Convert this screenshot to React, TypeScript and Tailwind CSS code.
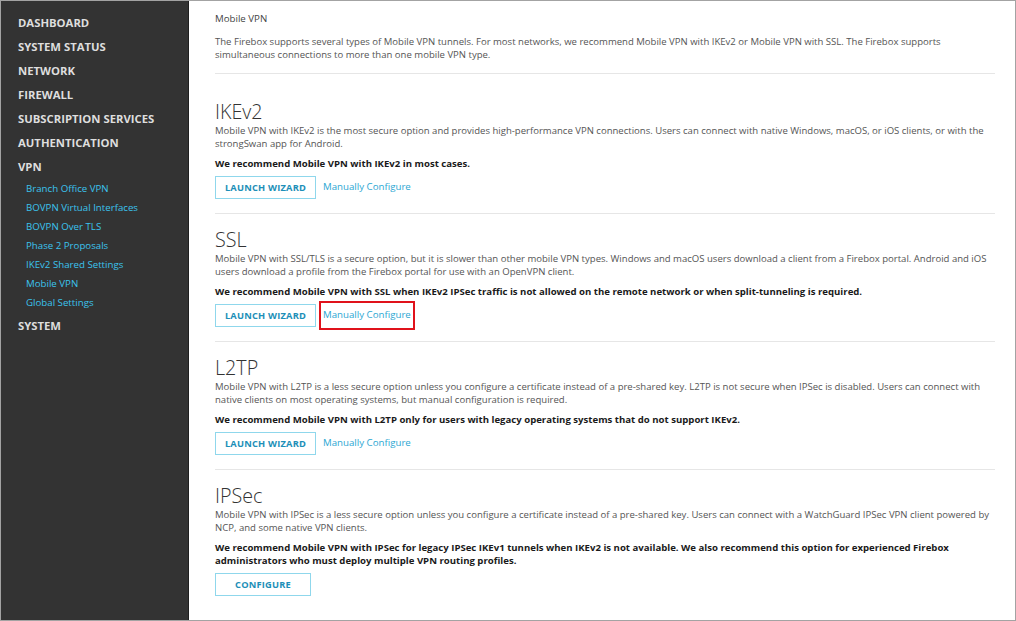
const menu = [
  "DASHBOARD",
  "SYSTEM STATUS",
  "NETWORK",
  "FIREWALL",
  "SUBSCRIPTION SERVICES",
  "AUTHENTICATION",
  "VPN",
]

const vpnItems = [
  "Branch Office VPN",
  "BOVPN Virtual Interfaces",
  "BOVPN Over TLS",
  "Phase 2 Proposals",
  "IKEv2 Shared Settings",
  "Mobile VPN",
  "Global Settings",
]

interface SectionProps {
  title: string
  text: string
  advice: string
  button: string
  manual?: boolean
  marked?: boolean
  first?: boolean
  last?: boolean
}

const Section = ({ title, text, advice, button, manual, marked, first, last }: SectionProps) => (
  <section
    className={`${first ? "pt-[25px]" : "pt-[13px]"} ${last ? "" : "border-b border-[#e6e6e6]"} pb-[14px]`}
  >
    <h2 className="text-[19.7px] leading-[25px] font-light text-[#333]">{title}</h2>
    <p className="text-[9.55px] leading-[13px] text-[#555]">{text}</p>
    <p className="mt-[7px] text-[9.6px] leading-[13px] font-bold text-[#1a1a1a]">{advice}</p>
    <div className="mt-[6px] flex items-center gap-[7px]">
      <button
        className={`h-[23px] ${button === "CONFIGURE" ? "w-[96px]" : "w-[101px]"} border border-[#8fd7ec] text-[9.3px] font-bold tracking-[0.2px] text-[#1d8fb8]`}
      >
        {button}
      </button>
      {manual && (
        <span className="relative text-[9.7px] text-[#2ba7d3]">
          Manually Configure
          {marked && (
            <span className="absolute -left-[4px] -right-[4px] -top-[7px] -bottom-[7px] border-2 border-[#e0121b]" />
          )}
        </span>
      )}
    </div>
  </section>
)

const App = () => {
  return (
    <div
      className="w-[1016px] h-[621px] flex border border-[#a3a3a3] bg-white overflow-hidden"
      style={{ fontFamily: "'Open Sans', 'Noto Sans', sans-serif" }}
    >
      <nav className="w-[188px] shrink-0 bg-[#333333] border-r border-[#1f1f1f] pt-[10px] pl-[17px]">
        {menu.map((m) => (
          <div key={m} className="text-[11.3px] leading-[24px] font-bold text-[#dedede]">
            {m}
          </div>
        ))}
        <ul className="pl-[8px]">
          {vpnItems.map((v) => (
            <li key={v} className="text-[9.7px] leading-[19px] text-[#3bc3ee]">
              {v}
            </li>
          ))}
        </ul>
        <div className="mt-[2px] text-[11.3px] leading-[24px] font-bold text-[#dedede]">SYSTEM</div>
      </nav>

      <main className="flex-1 pl-[26px] pr-[20px] pt-[10px]">
        <div className="text-[9.7px] leading-[15px] text-[#444]">Mobile VPN</div>
        <p className="mt-[9px] pb-[12px] border-b border-[#e6e6e6] text-[9.55px] leading-[13px] text-[#555]">
          The Firebox supports several types of Mobile VPN tunnels. For most networks, we recommend Mobile
          VPN with IKEv2 or Mobile VPN with SSL. The Firebox supports simultaneous connections to more
          than one mobile VPN type.
        </p>

        <Section
          first
          title="IKEv2"
          text="Mobile VPN with IKEv2 is the most secure option and provides high-performance VPN connections. Users can connect with native Windows, macOS, or iOS clients, or with the strongSwan app for Android."
          advice="We recommend Mobile VPN with IKEv2 in most cases."
          button="LAUNCH WIZARD"
          manual
        />
        <Section
          title="SSL"
          text="Mobile VPN with SSL/TLS is a secure option, but it is slower than other mobile VPN types. Windows and macOS users download a client from a Firebox portal. Android and iOS users download a profile from the Firebox portal for use with an OpenVPN client."
          advice="We recommend Mobile VPN with SSL when IKEv2 IPSec traffic is not allowed on the remote network or when split-tunneling is required."
          button="LAUNCH WIZARD"
          manual
          marked
        />
        <Section
          title="L2TP"
          text="Mobile VPN with L2TP is a less secure option unless you configure a certificate instead of a pre-shared key. L2TP is not secure when IPSec is disabled. Users can connect with native clients on most operating systems, but manual configuration is required."
          advice="We recommend Mobile VPN with L2TP only for users with legacy operating systems that do not support IKEv2."
          button="LAUNCH WIZARD"
          manual
        />
        <Section
          last
          title="IPSec"
          text="Mobile VPN with IPSec is a less secure option unless you configure a certificate instead of a pre-shared key. Users can connect with a WatchGuard IPSec VPN client powered by NCP, and some native VPN clients."
          advice="We recommend Mobile VPN with IPSec for legacy IPSec IKEv1 tunnels when IKEv2 is not available. We also recommend this option for experienced Firebox administrators who must deploy multiple VPN routing profiles."
          button="CONFIGURE"
        />
      </main>
    </div>
  )
}

export default App
